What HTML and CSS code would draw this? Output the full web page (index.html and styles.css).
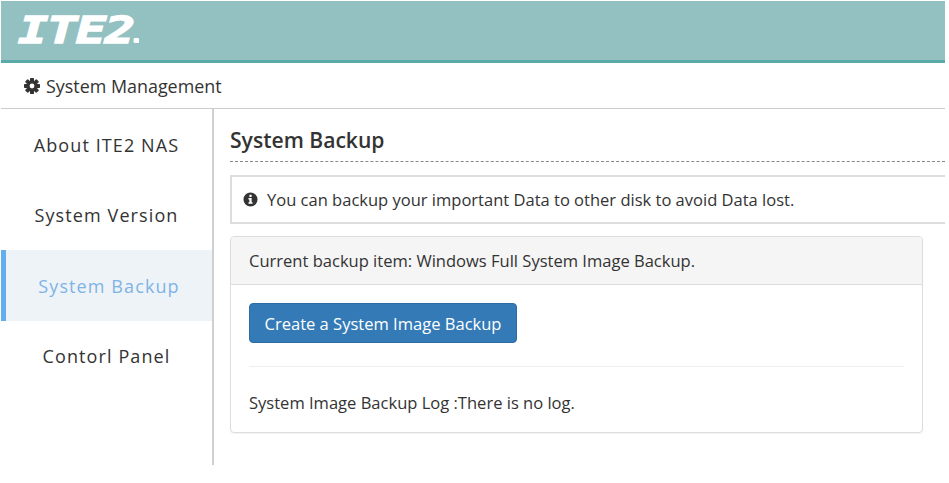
FILE: index.html
```html
<!DOCTYPE html>
<html lang="en">
<head>
  <meta charset="UTF-8">
  <meta name="viewport" content="width=device-width, initial-scale=1.0">
  <title>System Management</title>
  <link rel="stylesheet" href="styles.css">
</head>
<body>
  <div class="page">
    <!-- Header -->
    <div class="header">
      <span class="logo">ITE2<span class="logo-dot"></span></span>
    </div>

    <div class="title-bar">
      <svg class="gear" viewBox="0 0 24 24" aria-hidden="true">
        <rect x="9" y="0" width="6" height="24" rx="1"/>
        <rect x="9" y="0" width="6" height="24" rx="1" transform="rotate(45 12 12)"/>
        <rect x="9" y="0" width="6" height="24" rx="1" transform="rotate(90 12 12)"/>
        <rect x="9" y="0" width="6" height="24" rx="1" transform="rotate(135 12 12)"/>
        <circle cx="12" cy="12" r="8.5"/>
        <circle cx="12" cy="12" r="3.6" fill="#ffffff"/>
      </svg>
      <span>System Management</span>
    </div>

    <div class="content">
      <!-- Sidebar -->
      <div class="sidebar">
        <div class="nav-item">About ITE2 NAS</div>
        <div class="nav-item">System Version</div>
        <div class="nav-item active">System Backup</div>
        <div class="nav-item">Contorl Panel</div>
      </div>

      <!-- Main Content -->
      <div class="main-content">
        <div class="page-title">System Backup</div>
        <div class="notice">
          <svg class="info" viewBox="0 0 16 16" aria-hidden="true">
            <path fill-rule="evenodd" d="M8 .5a7.5 7.5 0 1 1 0 15A7.5 7.5 0 0 1 8 .5zM6.8 3v2.2h2.4V3zM5.8 6.4V8h1v2.9h-1v1.6h4.4v-1.6h-1V6.4z"/>
          </svg>
          <span>You can backup your important Data to other disk to avoid Data lost.</span>
        </div>
        <div class="panel">
          <div class="panel-heading">Current backup item: Windows Full System Image Backup.</div>
          <div class="panel-body">
            <button class="button">Create a System Image Backup</button>
            <div class="divider"></div>
            <div class="log">System Image Backup Log :There is no log.</div>
          </div>
        </div>
      </div>
    </div>
  </div>
</body>
</html>
```

FILE: styles.css
```css
html, body {
  margin: 0;
  padding: 0;
  background-color: #ffffff;
  overflow: hidden;
}

body {
  font-family: "Open Sans", "Noto Sans", sans-serif;
  font-size: 16.55px;
  color: #333333;
}

.page {
  width: 944px;
  height: 483px;
  margin-left: 1px;
  padding-top: 1px;
  box-sizing: border-box;
  overflow: hidden;
}

/* Header */
.header {
  height: 59px;
  padding-left: 17px;
  background-color: #93c1c2;
  border-bottom: 3px solid #5aaaa8;
  overflow: hidden;
}

.logo {
  display: block;
  width: 96px;
  font-family: "DejaVu Sans Mono", monospace;
  font-size: 37px;
  font-weight: 700;
  font-style: italic;
  line-height: 59px;
  letter-spacing: -1px;
  color: #ffffff;
  -webkit-text-stroke: 1.4px #ffffff;
  transform: scaleX(1.36);
  transform-origin: left center;
}

.logo-dot {
  display: inline-block;
  width: 4.4px;
  height: 5px;
  margin-left: -0.5px;
  background-color: #ffffff;
  border-radius: 1px;
}

.title-bar {
  display: flex;
  align-items: center;
  gap: 6px;
  height: 45px;
  padding-left: 23px;
  font-size: 17.9px;
  border-bottom: 1px solid #cccccc;
}

.gear {
  width: 16px;
  height: 16px;
  fill: #333333;
}

.content {
  display: flex;
}

/* Sidebar */
.sidebar {
  width: 213px;
  height: 356px;
  flex-shrink: 0;
  box-sizing: border-box;
  border-right: 2px solid #d0d0d0;
}

.nav-item {
  display: flex;
  align-items: center;
  justify-content: center;
  height: 70.5px;
  padding-top: 1px;
  box-sizing: border-box;
  font-size: 18px;
  letter-spacing: 1.1px;
  color: #333333;
}

.nav-item.active {
  color: #7fb3e6;
  background-color: #eef3f8;
  border-left: 5px solid #64aeed;
}

/* Main Content */
.main-content {
  flex-grow: 1;
  min-width: 0;
  padding-left: 16px;
}

.page-title {
  height: 53px;
  box-sizing: border-box;
  padding-top: 15px;
  font-size: 21.1px;
  font-weight: 600;
  line-height: 32px;
  border-bottom: 1px dashed #888888;
}

.notice {
  display: flex;
  align-items: center;
  gap: 9px;
  height: 49px;
  margin-top: 13px;
  padding-left: 11px;
  box-sizing: border-box;
  font-size: 16.52px;
  border: 2px solid #dddddd;
  border-right: none;
}

.info {
  width: 15px;
  height: 15px;
  fill: #333333;
}

.panel {
  width: 693px;
  height: 197px;
  margin-top: 12px;
  box-sizing: border-box;
  border: 1px solid #dddddd;
  border-radius: 4px;
  box-shadow: 0 1px 1px rgba(0, 0, 0, 0.05);
}

.panel-heading {
  height: 47px;
  padding-left: 18px;
  line-height: 48px;
  background-color: #f5f5f5;
  border-bottom: 1px solid #dddddd;
  border-radius: 3px 3px 0 0;
}

.panel-body {
  padding: 18px 18px 0;
}

.button {
  display: block;
  width: 268px;
  height: 40px;
  padding: 0;
  font-family: inherit;
  font-size: 16.55px;
  color: #ffffff;
  background-color: #337ab7;
  border: 1px solid #2e6da4;
  border-radius: 4px;
}

.divider {
  margin-top: 23px;
  border-top: 1px solid #eeeeee;
}

.log {
  margin-top: 24px;
  line-height: 24px;
}
```
